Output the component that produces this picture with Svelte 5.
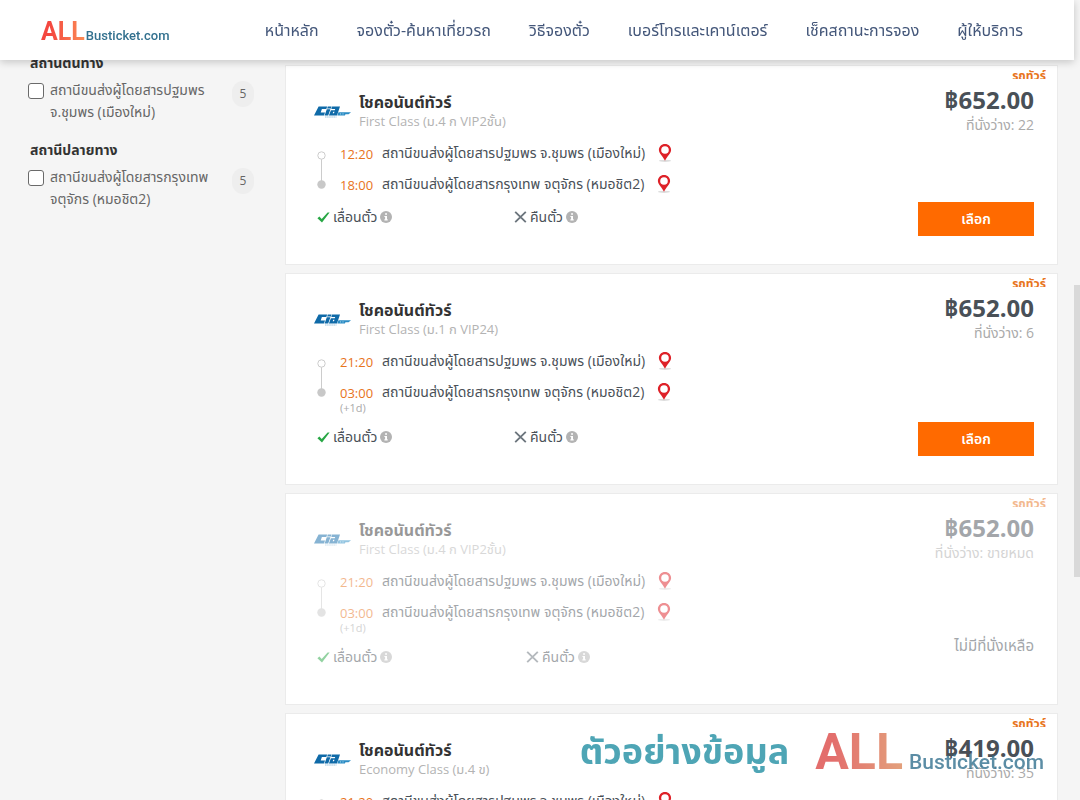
<script>
  const nav = [
    'หน้าหลัก',
    'จองตั๋ว-ค้นหาเที่ยวรถ',
    'วิธีจองตั๋ว',
    'เบอร์โทรและเคาน์เตอร์',
    'เช็คสถานะการจอง',
    'ผู้ให้บริการ',
  ];

  const filters = [
    { title: 'สถานีต้นทาง', lines: ['สถานีขนส่งผู้โดยสารปฐมพร', 'จ.ชุมพร (เมืองใหม่)'], count: 5 },
    { title: 'สถานีปลายทาง', lines: ['สถานีขนส่งผู้โดยสารกรุงเทพ', 'จตุจักร (หมอชิต2)'], count: 5 },
  ];

  const from = 'สถานีขนส่งผู้โดยสารปฐมพร จ.ชุมพร (เมืองใหม่)';
  const to = 'สถานีขนส่งผู้โดยสารกรุงเทพ จตุจักร (หมอชิต2)';

  const trips = [
    { cls: 'First Class (ม.4 ก VIP2ชั้น)', dep: '12:20', arr: '18:00', next: false, price: '652.00', seats: '22', open: true },
    { cls: 'First Class (ม.1 ก VIP24)', dep: '21:20', arr: '03:00', next: true, price: '652.00', seats: '6', open: true },
    { cls: 'First Class (ม.4 ก VIP2ชั้น)', dep: '21:20', arr: '03:00', next: true, price: '652.00', seats: 'ขายหมด', open: false },
    { cls: 'Economy Class (ม.4 ข)', dep: '21:20', arr: '03:00', next: true, price: '419.00', seats: '35', open: true },
  ];
</script>

{#snippet pin()}
  <svg class="pin" width="14" height="18" viewBox="0 0 14 18" aria-hidden="true">
    <ellipse cx="7" cy="16.8" rx="6" ry="1.1" fill="#ddd" />
    <path d="M7 0C3.4 0 .9 2.7 .9 6C.9 9.4 5 12.2 7 16.8C9 12.2 13.1 9.4 13.1 6C13.1 2.7 10.6 0 7 0Z" fill="#de2128" />
    <circle cx="7" cy="6" r="3.8" fill="#fff" />
  </svg>
{/snippet}

{#snippet info()}
  <svg width="12" height="12" viewBox="0 0 12 12" aria-hidden="true">
    <circle cx="6" cy="6" r="6" fill="#b3b3b3" />
    <path d="M5.1 2.2h1.9v1.6H5.1zM4.4 4.9H7v3.3h.7v1.2H4.4V8.2h.7V6.1h-.7z" fill="#fff" />
  </svg>
{/snippet}

<header>
  <a class="brand" href="#top"><b>ALL</b><span>Busticket.com</span></a>
  <nav>
    {#each nav as item}
      <a href="#top">{item}</a>
    {/each}
  </nav>
</header>

<div class="page">
  <aside>
    {#each filters as f, i}
      <section>
        <h2>{f.title}</h2>
        <div class="option">
          <input type="checkbox" id="station-{i}" />
          <label for="station-{i}">{f.lines[0]}<br />{f.lines[1]}</label>
          <span class="count">{f.count}</span>
        </div>
      </section>
    {/each}
  </aside>

  <main>
    {#each trips as t}
      <article class:soldout={!t.open}>
        <div class="inner">
          <span class="tag">รถทัวร์</span>
          <div class="details">
            <div class="operator">
              <svg width="37" height="12" viewBox="0 0 37 12" aria-hidden="true">
                <path d="M4.6 .5H13.2L12.3 3H7.9L6.7 6.4H11L10 9.6H0Z" fill="#0f6aa8" />
                <path d="M13.8 .5H17.6L17 2.4H13.1ZM12.8 3.2H16.4L14.2 9.6H10.6Z" fill="#0f6aa8" />
                <path d="M18.1 .5H26L23 9.6H14.9L16.9 4.2H20.8L21.2 3H17.3ZM19.2 5.8L18.7 7.3H20L20.5 5.8Z" fill="#0f6aa8" fill-rule="evenodd" />
                <path d="M24.4 6.2H37L34.6 8.2H31.4L31 9.4H23.4Z" fill="#2b8cc4" />
                <path d="M26.6 7.2V8.6M29 7.2V8.6" stroke="#bfe3f4" stroke-width=".7" />
                <path d="M11 11H22.5" stroke="#9cc3dc" stroke-width="1" stroke-dasharray="1.6 .5" />
              </svg>
              <div>
                <h3>โชคอนันต์ทัวร์</h3>
                <p>{t.cls}</p>
              </div>
            </div>
            <div class="route">
              <svg width="9" height="38" viewBox="0 0 9 38" aria-hidden="true">
                <path d="M4.5 8V30" stroke="#ccc" />
                <circle cx="4.5" cy="4.5" r="3.7" fill="#fff" stroke="#ccc" />
                <circle cx="4.5" cy="33.5" r="4.2" fill="#c8c8c8" />
              </svg>
              <div>
                <div class="stop"><time>{t.dep}</time><span>{from}</span>{@render pin()}</div>
                <div class="stop"><time>{t.arr}</time><span>{to}</span>{@render pin()}</div>
                {#if t.next}<small>(+1d)</small>{/if}
              </div>
            </div>
            <div class="policies">
              <div>
                <svg width="13" height="11" viewBox="0 0 13 11" aria-hidden="true">
                  <path d="M.4 6.2L2.4 4.6L4.7 6.9L10.6 .5H12.6L5 10.6Z" fill="#28a745" />
                </svg>
                <span>เลื่อนตั๋ว</span>{@render info()}
              </div>
              <div>
                <svg width="13" height="12" viewBox="0 0 13 12" aria-hidden="true">
                  <path d="M1.2 .9L11.8 11.1M11.8 .9L1.2 11.1" stroke="#6c757d" stroke-width="1.9" />
                </svg>
                <span>คืนตั๋ว</span>{@render info()}
              </div>
            </div>
          </div>
          <div class="booking">
            <strong>฿{t.price}</strong>
            <p>ที่นั่งว่าง: {t.seats}</p>
            {#if t.open}
              <button type="button">เลือก</button>
            {:else}
              <span class="none">ไม่มีที่นั่งเหลือ</span>
            {/if}
          </div>
        </div>
      </article>
    {/each}
  </main>
</div>

<div class="watermark">
  <em>ตัวอย่างข้อมูล</em>
  <div class="brand large"><b>ALL</b><span>Busticket.com</span></div>
</div>
<div class="thumb"></div>

<style>
  :global(body) {
    background: #f5f5f5;
    overflow: hidden;
    font-family: 'Open Sans', 'Noto Sans Thai', 'Noto Sans', sans-serif;
    font-size: 14px;
    color: #495057;
  }
  h2, h3, p { margin: 0; }
  header {
    position: fixed;
    inset: 0 6px auto 0;
    z-index: 2;
    box-sizing: border-box;
    height: 60px;
    padding: 0 51px 0 41px;
    display: flex;
    align-items: center;
    justify-content: space-between;
    background: #fff;
    box-shadow: 0 2px 8px rgba(0, 0, 0, 0.2);
  }
  header .brand { padding-top: 8px; }
  nav { display: flex; gap: 38px; }
  nav a {
    font-size: 16px;
    line-height: 24px;
    color: #44577a;
    text-decoration: none;
    white-space: nowrap;
  }
  .brand {
    display: flex;
    align-items: baseline;
    gap: 1px;
    font-family: Roboto, sans-serif;
    line-height: 32px;
    text-decoration: none;
  }
  .brand b {
    font-size: 25px;
    background: linear-gradient(90deg, #f4473f 20%, #fb8c55);
    background-clip: text;
    color: transparent;
  }
  .brand span { font-size: 13px; font-weight: 500; color: #33718f; }
  .page {
    height: 100vh;
    box-sizing: border-box;
    overflow: hidden;
    display: grid;
    grid-template-columns: 256px minmax(0, 1fr);
    gap: 29px;
    padding: 0 22px 0 0;
  }
  aside { padding: 53px 0 0 28px; }
  section { margin-bottom: 17px; }
  h2 {
    font-size: 14px;
    line-height: 20px;
    padding-left: 2px;
    margin-bottom: 6px;
    color: #333;
  }
  .option { display: flex; align-items: flex-start; line-height: 22px; color: #666; }
  .option input {
    appearance: none;
    box-sizing: border-box;
    width: 16px;
    height: 16px;
    margin: 4px 6px 0 0;
    border: 1px solid #6a6a6a;
    border-radius: 3px;
    background: #fff;
  }
  .option label { flex: 1; white-space: nowrap; }
  .count {
    width: 22px;
    height: 26px;
    margin: 2px 2px 0 0;
    border-radius: 13px;
    background: #eee;
    line-height: 26px;
    font-size: 12px;
    text-align: center;
  }
  main { padding-top: 65px; }
  article {
    margin-bottom: 8px;
    background: #fff;
    border: 1px solid #ebebeb;
  }
  .inner {
    position: relative;
    display: flex;
    justify-content: space-between;
    padding: 26px 23px 28px 28px;
  }
  .soldout .inner { opacity: 0.5; }
  .tag {
    position: absolute;
    top: 0;
    right: 11px;
    height: 13px;
    overflow: hidden;
    font-size: 12px;
    font-weight: 700;
    line-height: 20px;
    color: #e8741c;
  }
  .operator { display: flex; align-items: center; gap: 8px; }
  h3 { font-size: 16px; line-height: 20px; color: #333; white-space: nowrap; }
  .operator p { font-size: 13px; line-height: 19px; color: #b3b3b3; }
  .route { display: flex; gap: 14px; padding: 7px 0 0 3px; }
  .route > svg { margin-top: 13px; }
  .stop { display: flex; align-items: center; height: 31px; white-space: nowrap; }
  .stop time { width: 42px; font-size: 13px; color: #e8741c; }
  .stop .pin { margin: 0 0 2px 13px; }
  .route small {
    display: block;
    height: 12px;
    margin-top: -6px;
    margin-bottom: 6px;
    font-size: 11px;
    line-height: 12px;
    color: #aaa;
  }
  .policies { display: grid; grid-template-columns: 197px auto; margin: 7px 0 9px 3px; }
  .policies div { display: flex; align-items: center; gap: 3px; line-height: 20px; }
  .soldout .policies { grid-template-columns: 209px auto; }
  .booking { display: flex; flex-direction: column; align-items: flex-end; }
  .booking strong { font-size: 24px; line-height: 16px; }
  .booking p { line-height: 20px; margin-top: 7px; color: #aaa; }
  button {
    width: 116px;
    height: 34px;
    margin-top: auto;
    padding: 0;
    border: 0;
    background: #ff6a00;
    color: #fff;
    font: 600 14px/34px 'Open Sans', 'Noto Sans Thai', sans-serif;
  }
  .none { margin: auto 0 21px; font-size: 15px; line-height: 20px; }
  .watermark {
    position: fixed;
    right: 36px;
    bottom: 6px;
    z-index: 1;
    display: flex;
    align-items: flex-end;
    gap: 26px;
    opacity: 0.8;
    pointer-events: none;
  }
  .watermark em { font-style: normal; font-weight: 700; font-size: 36px; line-height: 86px; color: #228fa3; }
  .large { gap: 6px; line-height: 64px; }
  .large b {
    font-size: 50px;
    background: linear-gradient(90deg, #dc4a48 20%, #dc8a5c);
    background-clip: text;
  }
  .large span { font-size: 21px; }
  .thumb {
    position: fixed;
    top: 285px;
    right: 0;
    width: 6px;
    height: 292px;
    background: #d9d9d9;
  }
</style>
